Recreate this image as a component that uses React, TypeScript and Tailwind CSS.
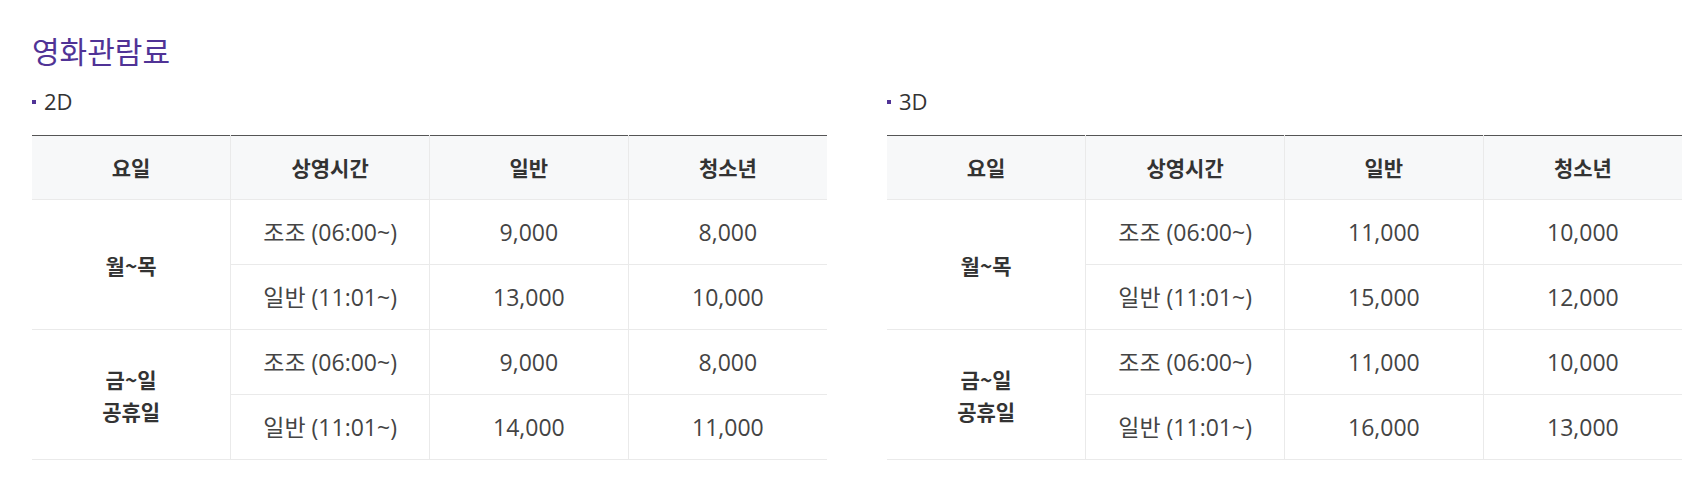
import React from 'react';

type Row = { time: string; adult: string; teen: string };
type Group = { day: string[]; rows: Row[] };

const prices2d: Group[] = [
  {
    day: ['월~목'],
    rows: [
      { time: '조조 (06:00~)', adult: '9,000', teen: '8,000' },
      { time: '일반 (11:01~)', adult: '13,000', teen: '10,000' },
    ],
  },
  {
    day: ['금~일', '공휴일'],
    rows: [
      { time: '조조 (06:00~)', adult: '9,000', teen: '8,000' },
      { time: '일반 (11:01~)', adult: '14,000', teen: '11,000' },
    ],
  },
];

const prices3d: Group[] = [
  {
    day: ['월~목'],
    rows: [
      { time: '조조 (06:00~)', adult: '11,000', teen: '10,000' },
      { time: '일반 (11:01~)', adult: '15,000', teen: '12,000' },
    ],
  },
  {
    day: ['금~일', '공휴일'],
    rows: [
      { time: '조조 (06:00~)', adult: '11,000', teen: '10,000' },
      { time: '일반 (11:01~)', adult: '16,000', teen: '13,000' },
    ],
  },
];

// latin glyphs closer to the reference, hangul falls back to Noto CJK
const bodyFont = { fontFamily: '"Open Sans", "Noto Sans CJK KR", sans-serif' };

const PriceTable = ({ title, groups }: { title: string; groups: Group[] }) => {
  return (
    <div className="w-[795px] shrink-0">
      {/* sub title */}
      <div className="flex items-center h-[30px] mb-[19px]">
        <span className="w-[4px] h-[4px] bg-[#503396] mr-[8px] mt-[1px]" />
        <span className="text-[22px] text-[#333] leading-none" style={bodyFont}>
          {title}
        </span>
      </div>

      <table className="w-full table-fixed border-collapse border-t border-[#555]">
        <thead>
          <tr className="bg-[#f7f8f9]">
            {['요일', '상영시간', '일반', '청소년'].map((h, i) => (
              <th
                key={h}
                className={`h-[64px] p-0 text-[21px] font-bold text-[#333] border-b border-[#eaeaea] ${
                  i > 0 ? 'border-l' : ''
                }`}
              >
                {h}
              </th>
            ))}
          </tr>
        </thead>
        <tbody style={bodyFont}>
          {groups.map((g) =>
            g.rows.map((r, idx) => (
              <tr key={g.day.join() + idx}>
                {idx === 0 && (
                  <th
                    rowSpan={2}
                    className="p-0 text-[21px] font-bold text-[#333] leading-[32px] border-b border-[#eaeaea]"
                    style={{ fontFamily: '"Noto Sans CJK KR", sans-serif' }}
                  >
                    {g.day.map((d) => (
                      <div key={d}>{d}</div>
                    ))}
                  </th>
                )}
                <td className="h-[65px] p-0 text-center text-[23px] text-[#444] border-l border-b border-[#eaeaea]">
                  {r.time}
                </td>
                <td className="h-[65px] p-0 text-center text-[23px] text-[#444] border-l border-b border-[#eaeaea]">
                  {r.adult}
                </td>
                <td className="h-[65px] p-0 text-center text-[23px] text-[#444] border-l border-b border-[#eaeaea]">
                  {r.teen}
                </td>
              </tr>
            ))
          )}
        </tbody>
      </table>
    </div>
  );
};

export default function App() {
  return (
    <div
      className="min-h-[490px] bg-white pl-[32px] pt-[30px]"
      style={{ fontFamily: '"Noto Sans CJK KR", "Noto Sans", sans-serif' }}
    >
      <h2 className="text-[30px] leading-[40px] text-[#503396] font-normal mb-[16px]">영화관람료</h2>
      <div className="flex gap-[60px]">
        <PriceTable title="2D" groups={prices2d} />
        <PriceTable title="3D" groups={prices3d} />
      </div>
    </div>
  );
}
